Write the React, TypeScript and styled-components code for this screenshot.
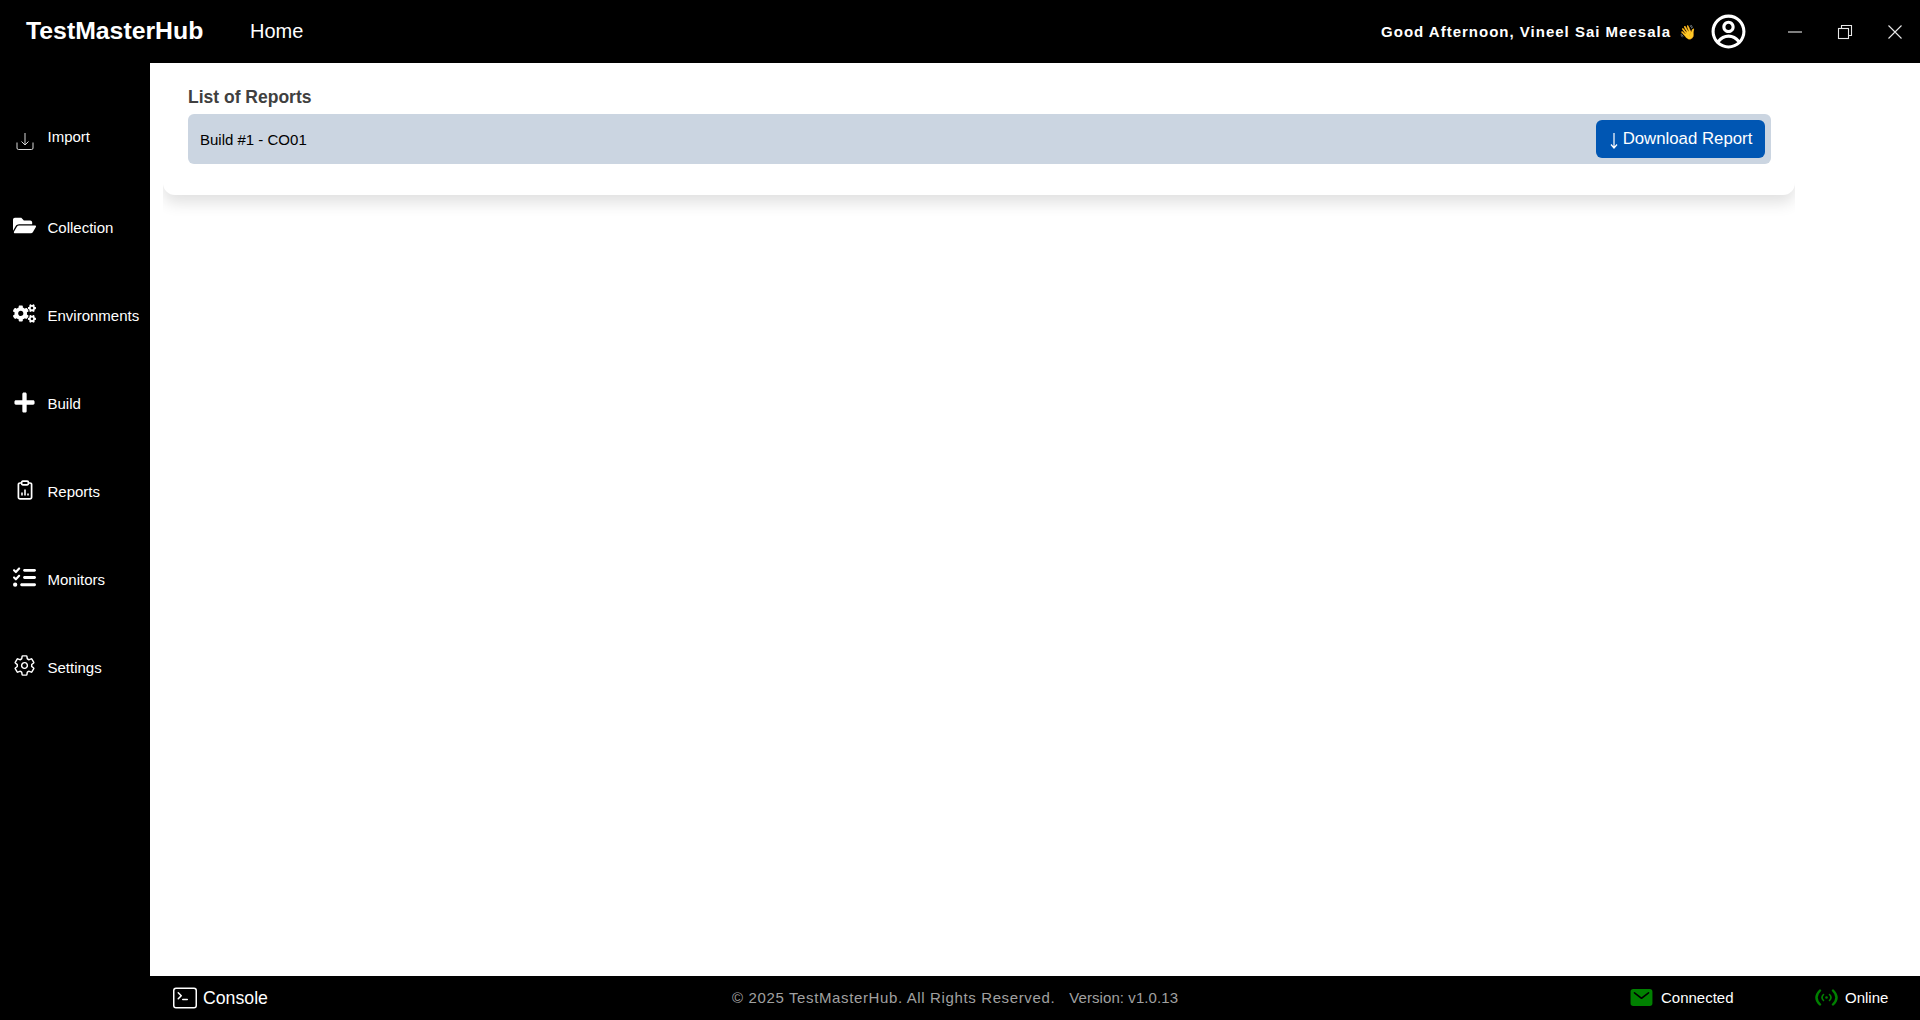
import { ReactNode } from "react";
import styled, { createGlobalStyle } from "styled-components";
import { BsTerminal } from "react-icons/bs";
import { CgProfile } from "react-icons/cg";
import { FaCogs, FaFolderOpen, FaPlus } from "react-icons/fa";
import { FaListCheck } from "react-icons/fa6";
import { IoMail, IoSettingsOutline } from "react-icons/io5";

const GlobalStyle = createGlobalStyle`
  html, body {
    margin: 0;
    height: 100%;
    background: #000;
    font-family: "Liberation Sans", Arial, sans-serif;
  }
  * {
    box-sizing: border-box;
  }
`;

const ImportIcon = () => (
  <svg width="20" height="20" viewBox="0 0 20 20" fill="none" stroke="#d8d8d8" strokeWidth="1">
    <path d="M2 11.5V17a1.5 1.5 0 0 0 1.5 1.5h13A1.5 1.5 0 0 0 18 17v-5.5" />
    <path d="M10 2v11.5M6.5 10.5l3.5 3.5 3.5-3.5" />
  </svg>
);

const ReportsIcon = () => (
  <svg width="16" height="20" viewBox="0 0 16 20" fill="none" stroke="#fff" strokeWidth="1.7">
    <path d="M4.5 3H3a1.6 1.6 0 0 0-1.6 1.6v12.6A1.6 1.6 0 0 0 3 18.8h10a1.6 1.6 0 0 0 1.6-1.6V4.6A1.6 1.6 0 0 0 13 3h-1.5" />
    <rect x="4.6" y="1.2" width="6.8" height="3.6" rx="1.2" />
    <path d="M5 15.5v-3M8 15.5V9.5M11 15.5v-2" strokeWidth="1.6" />
  </svg>
);

const MinimizeIcon = () => (
  <svg width="16" height="16" viewBox="0 0 16 16" stroke="#e8e8e8" strokeWidth="1.1">
    <path d="M1 8h14" />
  </svg>
);

const RestoreIcon = () => (
  <svg width="16" height="16" viewBox="0 0 16 16" fill="none" stroke="#e8e8e8" strokeWidth="1.1">
    <rect x="1.5" y="4.5" width="10" height="10" />
    <path d="M4.5 4.5V1.5h10v10h-3" />
  </svg>
);

const CloseIcon = () => (
  <svg width="16" height="16" viewBox="0 0 16 16" stroke="#e8e8e8" strokeWidth="1.1">
    <path d="M1.5 1.5l13 13M14.5 1.5l-13 13" />
  </svg>
);

const ArrowDown = () => (
  <svg width="10" height="17" viewBox="0 0 10 17" fill="none" stroke="#fff" strokeWidth="1.2">
    <path d="M5 1v15M2 12.5L5 16l3-3.5" />
  </svg>
);

const OnlineIcon = () => (
  <svg width="23" height="17" viewBox="0 0 23 17" fill="none" stroke="#008000" strokeLinecap="round">
    <path d="M5 1.5C.5 6 .5 11 5 15.5M18 1.5c4.5 4.5 4.5 9.5 0 14" strokeWidth="2.4" />
    <path d="M8.5 5.5c-2 2-2 4 0 6M14.5 5.5c2 2 2 4 0 6" strokeWidth="1.6" />
    <circle cx="11.5" cy="8.5" r="1.3" fill="#008000" stroke="none" />
  </svg>
);

const menu: { label: string; icon: ReactNode; nudge: number }[] = [
  { label: "Import", icon: <ImportIcon />, nudge: 5 },
  { label: "Collection", icon: <FaFolderOpen size={23} />, nudge: -2 },
  { label: "Environments", icon: <FaCogs size={23} />, nudge: -2 },
  { label: "Build", icon: <FaPlus size={23} />, nudge: -1 },
  { label: "Reports", icon: <ReportsIcon />, nudge: -1 },
  { label: "Monitors", icon: <FaListCheck size={23} />, nudge: -2 },
  { label: "Settings", icon: <IoSettingsOutline size={23} />, nudge: -2 },
];

const App = () => {
  return (
    <>
      <GlobalStyle />
      <S.Page>
        <S.TopBar>
          <S.Logo>TestMasterHub</S.Logo>
          <S.HomeLink>Home</S.HomeLink>
          <S.Greeting>Good Afternoon, Vineel Sai Meesala</S.Greeting>
          <S.Wave>👋</S.Wave>
          <S.Profile>
            <CgProfile size={37} />
          </S.Profile>
          <S.WindowControls>
            <S.WindowButton>
              <MinimizeIcon />
            </S.WindowButton>
            <S.WindowButton>
              <RestoreIcon />
            </S.WindowButton>
            <S.WindowButton>
              <CloseIcon />
            </S.WindowButton>
          </S.WindowControls>
        </S.TopBar>
        <S.Middle>
          <S.Sidebar>
            {menu.map((item) => (
              <S.MenuItem key={item.label}>
                <S.MenuIcon $nudge={item.nudge}>{item.icon}</S.MenuIcon>
                <span>{item.label}</span>
              </S.MenuItem>
            ))}
          </S.Sidebar>
          <S.Content>
            <S.CardClip>
              <S.Card>
                <S.Title>List of Reports</S.Title>
                <S.ReportRow>
                  <S.ReportName>Build #1 - CO01</S.ReportName>
                  <S.DownloadButton>
                    <ArrowDown />
                    Download Report
                  </S.DownloadButton>
                </S.ReportRow>
              </S.Card>
            </S.CardClip>
          </S.Content>
        </S.Middle>
        <S.Footer>
          <S.Console>
            <BsTerminal size={24} />
            Console
          </S.Console>
          <S.Copyright>
            © 2025 TestMasterHub. All Rights Reserved.
            <S.Version>Version: v1.0.13</S.Version>
          </S.Copyright>
          <S.Status $width={186}>
            <IoMail size={25} color="#008000" />
            Connected
          </S.Status>
          <S.Status $width={104}>
            <OnlineIcon />
            Online
          </S.Status>
        </S.Footer>
      </S.Page>
    </>
  );
};

export default App;

interface statusProps {
  $width: number;
}

interface iconProps {
  $nudge: number;
}

const S = {
  Page: styled.div`
    display: flex;
    flex-direction: column;
    height: 1020px;
    background: #000;
    overflow: hidden;
  `,
  TopBar: styled.header`
    display: flex;
    align-items: center;
    height: 63px;
    padding-left: 26px;
    color: #fff;
  `,
  Logo: styled.div`
    width: 224px;
    font-size: 24.8px;
    font-weight: 700;
    line-height: 1;
    margin-top: -1px;
  `,
  HomeLink: styled.div`
    font-size: 20px;
  `,
  Greeting: styled.div`
    margin-left: auto;
    margin-top: -1px;
    font-size: 15px;
    font-weight: 700;
    letter-spacing: 1px;
  `,
  Wave: styled.span`
    margin-left: 8px;
    font-size: 14px;
    line-height: 1;
  `,
  Profile: styled.div`
    display: flex;
    margin-left: 14px;
  `,
  WindowControls: styled.div`
    display: flex;
    gap: 34px;
    margin-left: 40px;
    margin-right: 17px;
  `,
  WindowButton: styled.div`
    display: flex;
  `,
  Middle: styled.div`
    display: flex;
    flex: 1;
    min-height: 0;
  `,
  Sidebar: styled.nav`
    display: flex;
    flex-direction: column;
    width: 150px;
    padding-top: 26px;
    color: #fff;
  `,
  MenuItem: styled.div`
    display: flex;
    align-items: center;
    height: 88px;
    padding-left: 13px;
    font-size: 15px;

    &:first-child {
      height: 94px;
    }
  `,
  MenuIcon: styled.span<iconProps>`
    display: flex;
    align-items: center;
    justify-content: center;
    width: 23px;
    margin-right: 11.5px;
    transform: translateY(${(props) => props.$nudge}px);
  `,
  Content: styled.main`
    flex: 1;
    background: #fff;
    padding-left: 13px;
  `,
  CardClip: styled.div`
    width: 1632px;
    height: 165px;
    overflow: hidden;
  `,
  Card: styled.section`
    height: 132px;
    padding: 24px 24px 0 25px;
    border-radius: 0 0 12px 12px;
    background: #fff;
    box-shadow: 0 8px 15px rgba(0, 0, 0, 0.12);
  `,
  Title: styled.h2`
    margin: 0 0 6px;
    font-size: 17.5px;
    line-height: 21px;
    font-weight: 700;
    color: #404040;
  `,
  ReportRow: styled.div`
    display: flex;
    align-items: center;
    justify-content: space-between;
    height: 50px;
    padding: 0 6px 0 12px;
    border-radius: 6px;
    background: #cbd5e1;
  `,
  ReportName: styled.span`
    padding-top: 1px;
    font-size: 15px;
    color: #000;
  `,
  DownloadButton: styled.button`
    display: flex;
    align-items: center;
    justify-content: center;
    gap: 4px;
    width: 169px;
    height: 38px;
    padding: 0;
    border: none;
    border-radius: 6px;
    background: #0056b3;
    color: #fff;
    font-family: inherit;
    font-size: 16.8px;

    svg {
      margin-top: 2px;
    }
  `,
  Footer: styled.footer`
    display: flex;
    align-items: center;
    height: 44px;
    padding-left: 173px;
    color: #fff;
  `,
  Console: styled.div`
    display: flex;
    align-items: center;
    gap: 6px;
    width: 559px;
    font-size: 17.7px;
  `,
  Copyright: styled.div`
    width: 897px;
    padding-bottom: 2px;
    font-size: 15px;
    letter-spacing: 0.63px;
    color: #a0a0a0;
  `,
  Version: styled.span`
    margin-left: 14px;
    letter-spacing: 0.08px;
  `,
  Status: styled.div<statusProps>`
    display: flex;
    align-items: center;
    gap: 7px;
    width: ${(props) => props.$width}px;
    padding-bottom: 1px;
    font-size: 15px;
  `,
};
